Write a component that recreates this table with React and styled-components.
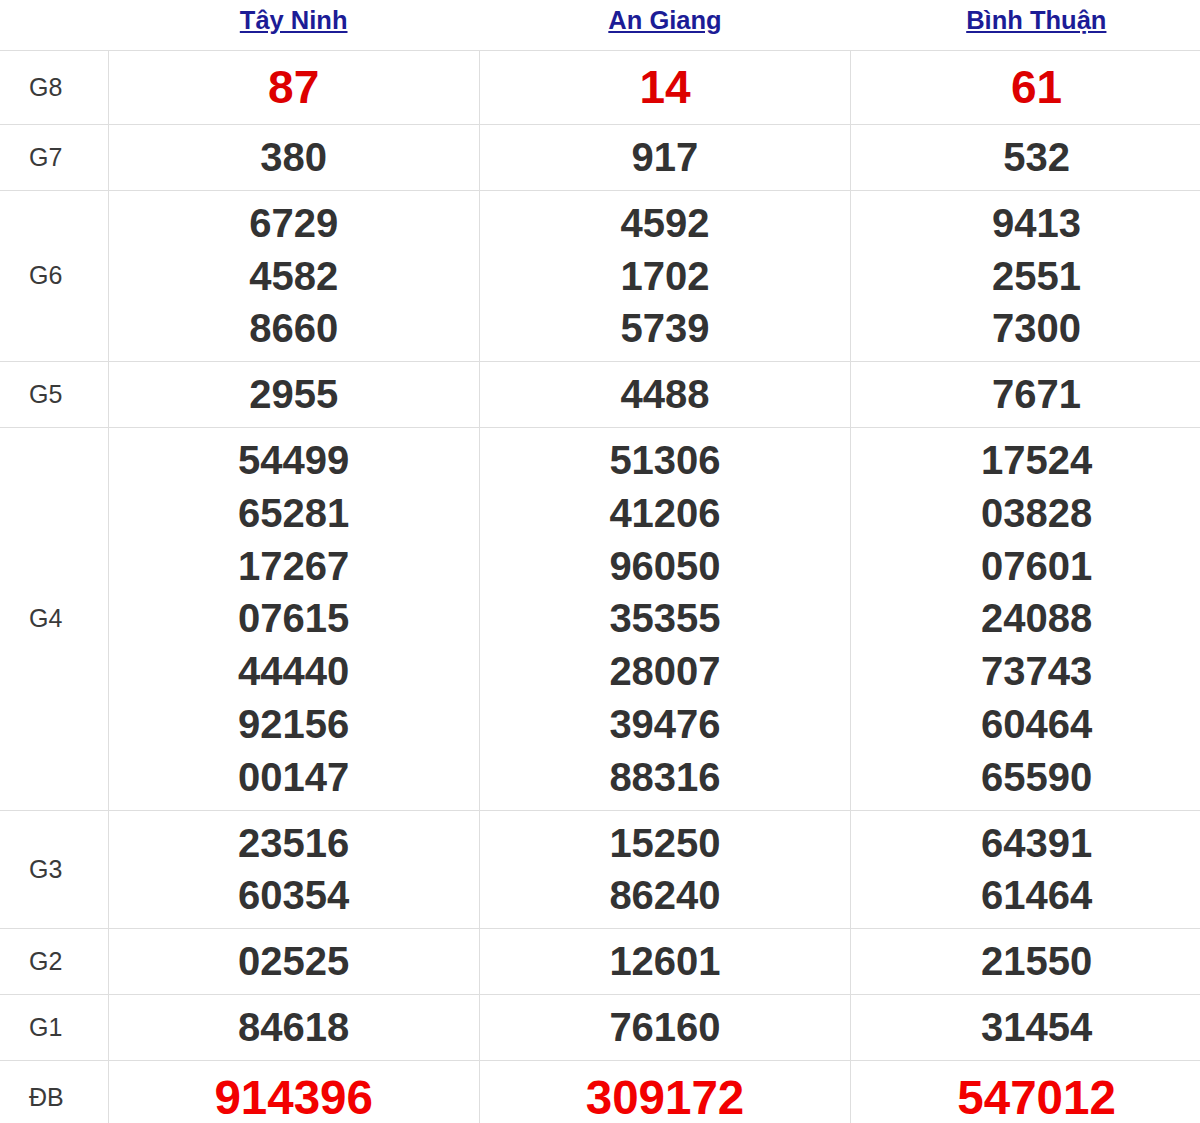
import React from 'react';
import styled, { createGlobalStyle } from 'styled-components';

const provinces = ['Tây Ninh', 'An Giang', 'Bình Thuận'];

const prizes = [
  { label: 'G8', special: 'g8', values: [['87'], ['14'], ['61']] },
  { label: 'G7', values: [['380'], ['917'], ['532']] },
  {
    label: 'G6',
    values: [
      ['6729', '4582', '8660'],
      ['4592', '1702', '5739'],
      ['9413', '2551', '7300'],
    ],
  },
  { label: 'G5', values: [['2955'], ['4488'], ['7671']] },
  {
    label: 'G4',
    values: [
      ['54499', '65281', '17267', '07615', '44440', '92156', '00147'],
      ['51306', '41206', '96050', '35355', '28007', '39476', '88316'],
      ['17524', '03828', '07601', '24088', '73743', '60464', '65590'],
    ],
  },
  {
    label: 'G3',
    values: [
      ['23516', '60354'],
      ['15250', '86240'],
      ['64391', '61464'],
    ],
  },
  { label: 'G2', values: [['02525'], ['12601'], ['21550']] },
  { label: 'G1', values: [['84618'], ['76160'], ['31454']] },
  { label: 'ĐB', special: 'db', values: [['914396'], ['309172'], ['547012']] },
];

const App = () => {
  return (
    <>
      <GlobalStyle />
      <ResultTable>
        <colgroup>
          <LabelCol />
          <ProvinceCol />
          <ProvinceCol />
          <ProvinceCol />
        </colgroup>
        <thead>
          <tr>
            <HeadCell />
            {provinces.map((name) => (
              <HeadCell key={name}>
                <ProvinceLink href="#">{name}</ProvinceLink>
              </HeadCell>
            ))}
          </tr>
        </thead>
        <tbody>
          {prizes.map((row) => (
            <tr key={row.label}>
              <LabelCell>{row.label}</LabelCell>
              {row.values.map((nums, i) => (
                <NumberCell key={i}>
                  {nums.map((n) => (
                    <Number key={n} $variant={row.special}>
                      {n}
                    </Number>
                  ))}
                </NumberCell>
              ))}
            </tr>
          ))}
        </tbody>
      </ResultTable>
    </>
  );
};

export default App;

const GlobalStyle = createGlobalStyle`
  html, body {
    margin: 0;
    padding: 0;
    background: #fff;
    overflow: hidden;
  }
  body {
    font-family: "Liberation Sans", Arial, sans-serif;
  }
`;

const ResultTable = styled.table`
  width: 1222px;
  border-collapse: collapse;
  table-layout: fixed;
  font-family: "Liberation Sans", Arial, sans-serif;
`;

const LabelCol = styled.col`
  width: 108px;
`;

const ProvinceCol = styled.col`
  width: 371.3px;
`;

const HeadCell = styled.th`
  height: 50px;
  padding: 6px 0 15px;
  box-sizing: border-box;
  vertical-align: top;
  text-align: center;
  border-bottom: 1px solid #dedede;
  font-size: 25.5px;
  line-height: 29px;
`;

const ProvinceLink = styled.a`
  font-size: 25.5px;
  font-weight: 700;
  color: #1c1c96;
  text-decoration: underline;
`;

const LabelCell = styled.td`
  padding: 0 0 0 29px;
  font-size: 25px;
  color: #3a3a3a;
  vertical-align: middle;
  border-top: 1px solid #dedede;
  border-right: 1px solid #dedede;
`;

const NumberCell = styled.td`
  padding: 6px 0;
  text-align: center;
  vertical-align: middle;
  border-top: 1px solid #dedede;
  border-left: 1px solid #dedede;
`;

const numberStyles = {
  g8: { size: '46px', line: '61px', color: '#dd0000' },
  db: { size: '47.5px', line: '61px', color: '#f20000' },
};

const Number = styled.div`
  font-weight: 700;
  font-size: ${(p) => (numberStyles[p.$variant] ? numberStyles[p.$variant].size : '40px')};
  line-height: ${(p) => (numberStyles[p.$variant] ? numberStyles[p.$variant].line : '52.8px')};
  color: ${(p) => (numberStyles[p.$variant] ? numberStyles[p.$variant].color : '#333')};
`;
